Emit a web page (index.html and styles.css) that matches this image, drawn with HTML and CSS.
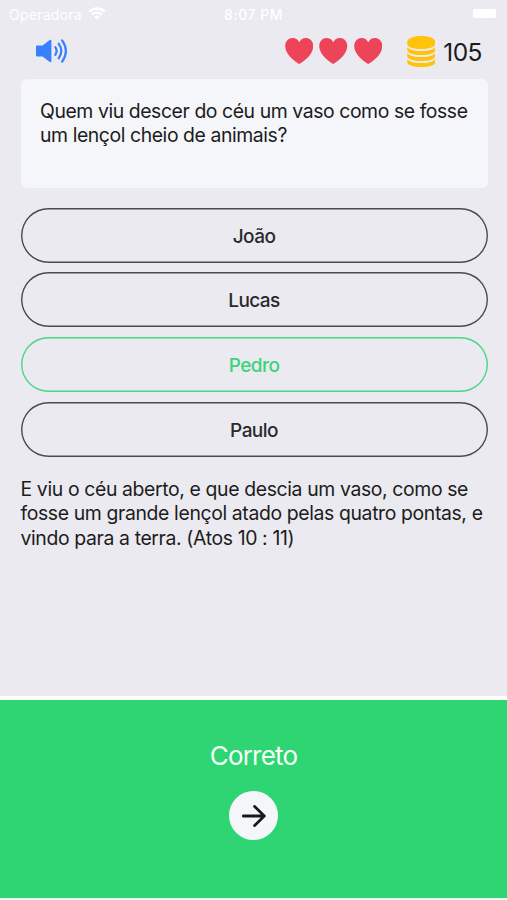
FILE: index.html
```html
<!DOCTYPE html>
<html lang="pt">
<head>
  <meta charset="UTF-8" />
  <meta name="viewport" content="width=device-width, initial-scale=1.0"/>
  <title>Quiz</title>
  <link rel="stylesheet" href="styles.css">
</head>
<body>

  <div class="status-bar">
    <div class="carrier">
      <span>Operadora</span>
      <svg class="wifi" viewBox="0 0 18 13">
        <path d="M1.2 4.6a11.2 11.2 0 0 1 15.6 0M4 7.6a7.2 7.2 0 0 1 10 0" fill="none" stroke="currentColor" stroke-width="2.4"/>
        <path d="M9 12.8L6.2 9.9a4 4 0 0 1 5.6 0z" fill="currentColor"/>
      </svg>
    </div>
    <div class="clock">8:07 PM</div>
    <div class="battery-box"><div class="battery"></div></div>
  </div>

  <header>
    <svg class="sound" viewBox="0 0 32 26">
      <path d="M1.2 7.5h5.3l7.300-5.500c.8-.6 1.600-.3 1.600.7v20.600c0 1-.8 1.300-1.600.7l-7.300-5.600H1.200C.5 18.400 0 17.900 0 17.200V8.700c0-.7.5-1.200 1.200-1.200z" fill="currentColor"/>
      <path d="M19.300 9.200q2.600 3.800 0 7.600M22.700 5.700q5.200 7.300 0 14.600M26.100 2.300q7.600 10.700 0 21.400" fill="none" stroke="currentColor" stroke-width="2.200" stroke-linecap="round"/>
    </svg>

    <div class="score">
      <div class="hearts">
        <svg viewBox="0 0 28 26"><path d="M14 26C11.5 24.5 0 17.5 0 8 0 3.3 3.3 0 7.3 0c3 0 5.4 1.5 6.7 4.2C15.300 1.500 17.700 0 20.700 0c4 0 7.300 3.300 7.300 8 0 9.500-11.500 16.500-14 18z"/></svg>
        <svg viewBox="0 0 28 26"><path d="M14 26C11.5 24.5 0 17.5 0 8 0 3.3 3.3 0 7.3 0c3 0 5.4 1.5 6.7 4.2C15.300 1.500 17.700 0 20.700 0c4 0 7.300 3.300 7.300 8 0 9.500-11.500 16.500-14 18z"/></svg>
        <svg viewBox="0 0 28 26"><path d="M14 26C11.5 24.5 0 17.5 0 8 0 3.3 3.3 0 7.3 0c3 0 5.4 1.5 6.7 4.2C15.300 1.500 17.700 0 20.700 0c4 0 7.300 3.300 7.300 8 0 9.500-11.500 16.500-14 18z"/></svg>
      </div>
      <svg class="coins" viewBox="0 0 28 31">
        <path d="M0 6C0 2.500 6 0 14 0s14 2.500 14 6v2c0 3-6 5-14 5S0 11 0 8z"/>
        <path d="M0 11.200c2.500 2.700 8 3.900 14 3.900s11.500-1.200 14-3.900v3c0 2.700-6 4.800-14 4.800S0 16.900 0 14.200z"/>
        <path d="M0 17.200c2.500 2.700 8 3.900 14 3.900s11.500-1.200 14-3.900v3c0 2.700-6 4.800-14 4.800S0 22.900 0 20.200z"/>
        <path d="M0 23.200c2.500 2.700 8 3.900 14 3.900s11.500-1.200 14-3.900v3C28 28.900 22 31 14 31S0 28.900 0 26.200z"/>
      </svg>
      <span class="points">105</span>
    </div>
  </header>

  <main>
    <div class="question">Quem viu descer do céu um vaso como se fosse um lençol cheio de animais?</div>

    <div class="answers">
      <button>João</button>
      <button>Lucas</button>
      <button class="correct">Pedro</button>
      <button>Paulo</button>
    </div>

    <p class="verse">E viu o céu aberto, e que descia um vaso, como se fosse um grande lençol atado pelas quatro pontas, e vindo para a terra. (Atos 10 : 11)</p>
  </main>

  <footer>
    <div class="result">Correto</div>
    <button class="next" aria-label="Próxima">
      <svg viewBox="0 0 24 22"><path d="M1.3 11h21M12.6 1.4L22.3 11l-9.7 9.6" fill="none" stroke="currentColor" stroke-width="2.8" stroke-linecap="round" stroke-linejoin="round"/></svg>
    </button>
  </footer>

</body>
</html>
```
FILE: styles.css
```css
:root {
  --bg: #ebeaf0;
  --card: #f4f6fa;
  --text: #1c1c20;
  --green: #2fd573;
  --red: #ee445a;
  --yellow: #ffc409;
  --blue: #3880ff;
}

* {
  margin: 0;
  padding: 0;
  box-sizing: border-box;
  font-family: Inter, "Liberation Sans", sans-serif;
}

body {
  height: 900px;
  display: flex;
  flex-direction: column;
  background-color: var(--bg);
  color: var(--text);
  overflow: hidden;
}

.status-bar {
  height: 28px;
  padding: 0 11px 0 9px;
  display: grid;
  grid-template-columns: 1fr auto 1fr;
  align-items: center;
  color: white;
  font-size: 14px;
}

.carrier {
  display: flex;
  align-items: center;
  gap: 6px;
  letter-spacing: 0.25px;
}

.wifi {
  width: 18px;
  height: 13px;
  margin-top: -2px;
}

.clock {
  padding-left: 2px;
  font-weight: 500;
  letter-spacing: 0.5px;
}

.battery-box {
  display: flex;
  justify-content: flex-end;
}

.battery {
  width: 23px;
  height: 9px;
  margin-top: -2px;
  border-radius: 2px;
  background-color: white;
}

header {
  height: 50px;
  padding: 0 25px 4px 35.5px;
  display: flex;
  justify-content: space-between;
  align-items: center;
}

.sound {
  width: 32px;
  height: 26px;
  color: var(--blue);
}

.score {
  display: flex;
  align-items: center;
}

.hearts {
  display: flex;
  gap: 6px;
  margin-right: 24.5px;
}

.hearts svg {
  width: 28.5px;
  height: 26px;
  fill: var(--red);
}

.coins {
  width: 28.5px;
  height: 31px;
  margin-right: 8px;
  margin-top: 1px;
  fill: var(--yellow);
}

.points {
  font-size: 24.5px;
  letter-spacing: -0.5px;
  margin-top: 2px;
}

main {
  flex: 1;
  padding: 0.5px 19.5px 0 20.5px;
}

.question {
  height: 109.5px;
  padding: 20px 10px 0 19.5px;
  border-radius: 6px;
  background-color: var(--card);
  font-size: 19.4px;
  line-height: 24.4px;
  letter-spacing: -0.42px;
}

.answers {
  display: flex;
  flex-direction: column;
  gap: 9.7px;
  margin-top: 19.5px;
}

.answers button {
  height: 55px;
  padding-top: 2px;
  border: none;
  border-radius: 28px;
  box-shadow: inset 0 0 0 1.4px #4b4a50;
  background: none;
  color: #29292d;
  font-size: 19px;
  font-weight: 500;
  letter-spacing: -0.55px;
}

.answers .correct {
  box-shadow: inset 0 0 0 1.4px #4bd584;
  color: #3bd47a;
}

.verse {
  margin-top: 20.5px;
  margin-right: -2px;
  font-size: 19.4px;
  line-height: 24.4px;
  letter-spacing: -0.37px;
}

footer {
  height: 204px;
  padding-top: 38.5px;
  display: flex;
  flex-direction: column;
  align-items: center;
  border-top: 4px solid white;
  border-bottom: 2px solid #e9fbf1;
  background-color: var(--green);
}

.result {
  color: #f4fff8;
  font-size: 26px;
  line-height: 34px;
  letter-spacing: -0.8px;
}

.next {
  width: 49px;
  height: 49px;
  margin-top: 18.5px;
  display: flex;
  justify-content: center;
  align-items: center;
  border: none;
  border-radius: 50%;
  background-color: var(--card);
  color: #19191d;
}

.next svg {
  width: 24px;
  height: 22px;
}
```
